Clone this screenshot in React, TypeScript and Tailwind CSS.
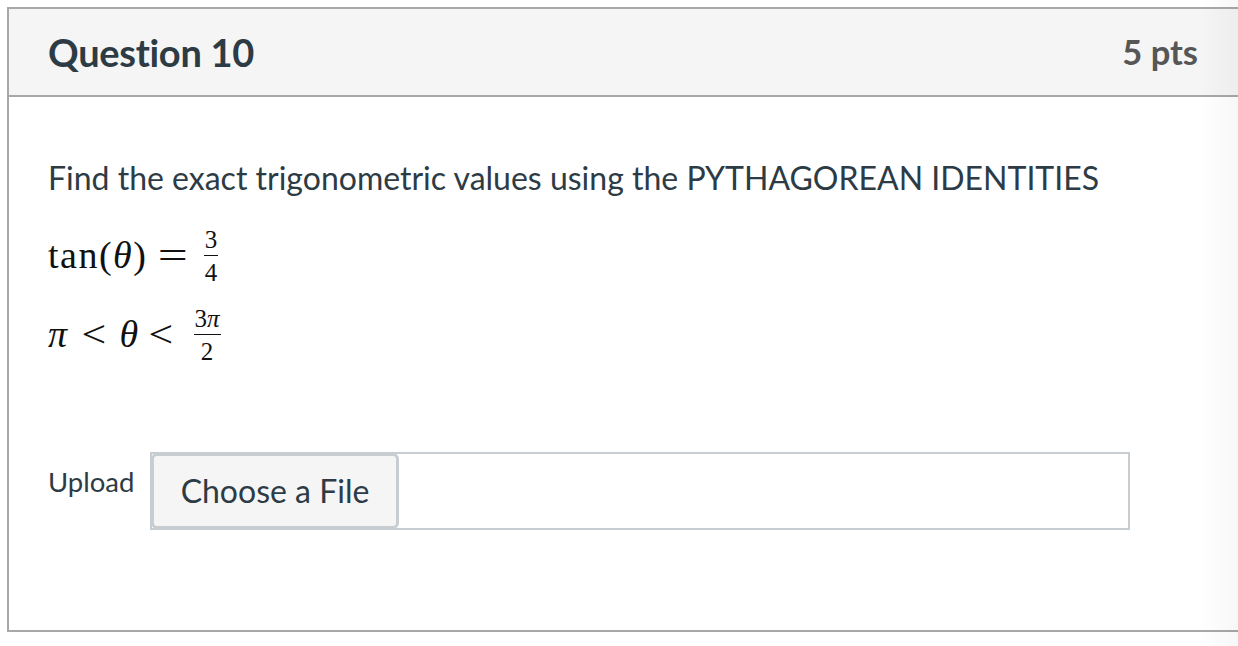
import React from 'react';

const lato = { fontFamily: 'Lato, "Open Sans", sans-serif' };

function Frac({ num, den }: { num: React.ReactNode; den: React.ReactNode }) {
  return (
    <span className="inline-flex flex-col items-center text-[25px] leading-none translate-y-[1px]">
      <span className="px-[1px] pb-[3px]">{num}</span>
      <span className="self-stretch border-t-[1.5px] border-[#111]" />
      <span className="px-[1px] pt-[4px]">{den}</span>
    </span>
  );
}

export default function App() {
  return (
    <div className="w-[1238px] h-[646px] overflow-hidden bg-white relative">
      <div className="ml-[7px] mt-[7px] w-[1260px] border-2 border-[#a8a8a8]" style={lato}>
        {/* header */}
        <div className="h-[88px] bg-[#f5f5f5] border-b-2 border-[#a8a8a8] flex items-center justify-between pl-[39px] pr-[67px]">
          <h2 className="text-[38px] font-bold text-[#2d3b45] tracking-[-0.3px]">Question 10</h2>
          <span className="text-[34.5px] font-bold text-[#565656]">5 pts</span>
        </div>

        {/* body */}
        <div className="h-[533px] pl-[39px] pt-[61px] text-[#2d3b45]">
          <p className="text-[32px] leading-[40px]">
            Find the exact trigonometric values using the PYTHAGOREAN IDENTITIES
          </p>

          <div className="mt-[25px] text-[#111] text-[38px]" style={{ fontFamily: '"Liberation Serif", serif' }}>
            <div className="flex items-center h-[64px]">
              <span className="tracking-[1.5px]">tan(<i>θ</i>)</span>
              <span className="inline-block ml-[15px] mr-[20px] scale-x-[1.4]">=</span>
              <Frac num="3" den="4" />
            </div>
            <div className="flex items-center h-[64px] mt-[15px]">
              <i className="tracking-[1px]">π</i>
              <span className="inline-block ml-[15px] mr-[15px] scale-x-[1.15]">&lt;</span>
              <i>θ</i>
              <span className="inline-block ml-[12px] mr-[22px] scale-x-[1.15]">&lt;</span>
              <Frac num={<>3<i>π</i></>} den="2" />
            </div>
          </div>

          <div className="mt-[86px] flex items-start">
            <span className="text-[27.5px] leading-[34px] mt-[13px] w-[102px]">Upload</span>
            <div className="flex w-[980px] h-[78px] border-2 border-[#c7cdd1]">
              <button className="w-[248px] -m-[1px] h-[76px] bg-[#f5f5f5] border-[3px] border-[#c7cdd1] rounded-[6px] text-[32px] text-[#2d3b45]">
                Choose a File
              </button>
            </div>
          </div>
        </div>
      </div>
      <div className="absolute top-0 right-0 w-[40px] h-[646px] bg-gradient-to-r from-transparent to-[#00000008]" />
    </div>
  );
}
